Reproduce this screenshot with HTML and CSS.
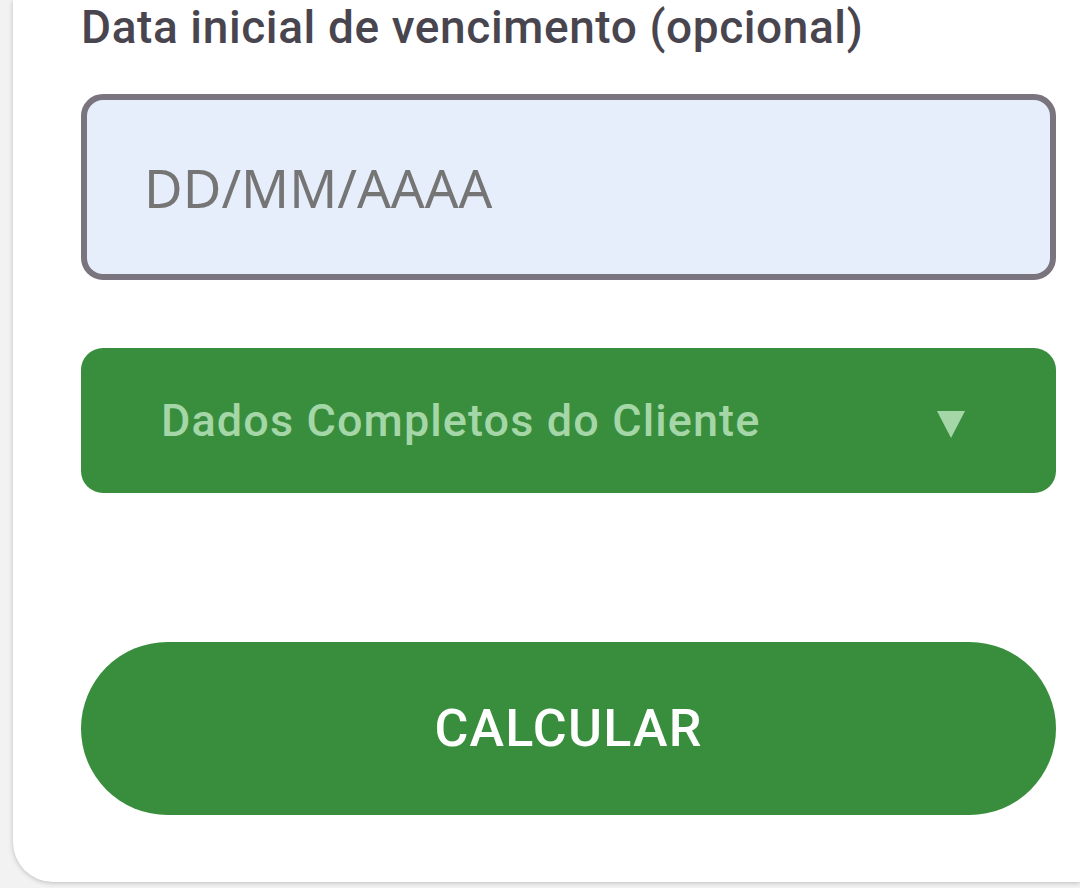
FILE: index.html
```html
<!DOCTYPE html>
<html lang="pt">
<head>
<meta charset="utf-8">
<link rel="stylesheet" href="styles.css">
</head>
<body>
<div class="card">
  <h2 class="label">Data inicial de vencimento (opcional)</h2>
  <div class="input"><span class="placeholder">DD/MM/AAAA</span></div>
  <div class="dropdown">
    <span class="dropdown-text">Dados Completos do Cliente</span>
    <svg class="caret" width="28" height="27" viewBox="0 0 28 27"><polygon points="0,0 28,0 14,27" fill="#a5d6a7"/></svg>
  </div>
  <div class="button">CALCULAR</div>
</div>
</body>
</html>
```
FILE: styles.css
```css
html, body {
  margin: 0;
  padding: 0;
}
body {
  background: #f2f2f2;
  width: 1080px;
  height: 888px;
  overflow: hidden;
  font-family: Roboto, "Liberation Sans", sans-serif;
}
.card {
  margin-left: 13px;
  background: #ffffff;
  border-bottom-left-radius: 40px;
  box-shadow: 0 1px 5px rgba(0, 0, 0, 0.22);
  padding: 0 24px 67px 68px;
  display: flex;
  flex-direction: column;
}
.label {
  margin: 0;
  font-size: 46px;
  font-weight: 500;
  letter-spacing: 0.6px;
  line-height: normal;
  color: #49454f;
  height: 54px;
}
.input {
  margin-top: 40px;
  height: 174px;
  border: 6px solid #79747e;
  border-radius: 22px;
  background: #e7eefb;
  display: flex;
  align-items: center;
  padding-left: 57px;
}
.placeholder {
  font-family: "Noto Sans", sans-serif;
  font-size: 53px;
  color: #757575;
}
.dropdown {
  margin-top: 68px;
  height: 145px;
  background: #388e3c;
  border-radius: 22px;
  display: flex;
  align-items: center;
  justify-content: space-between;
  padding-left: 80px;
  padding-right: 91px;
}
.dropdown-text {
  font-size: 45px;
  font-weight: 500;
  letter-spacing: 1.1px;
  color: #a5d6a7;
}
.caret {
  display: block;
  margin-top: 8px;
}
.button {
  margin-top: 149px;
  height: 173px;
  background: #388e3c;
  border-radius: 87px;
  display: flex;
  align-items: center;
  justify-content: center;
  font-size: 52px;
  font-weight: 500;
  letter-spacing: 1.2px;
  color: #ffffff;
}
```
